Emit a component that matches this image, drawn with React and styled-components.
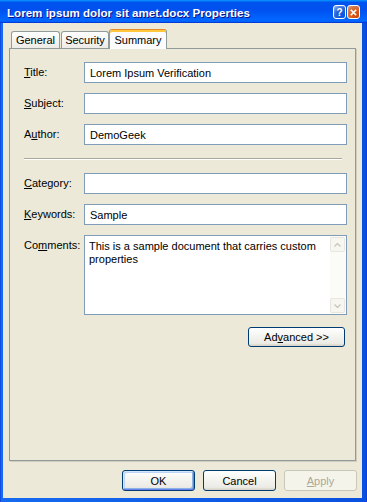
import React from 'react';
import styled, { createGlobalStyle } from 'styled-components';

const GlobalStyle = createGlobalStyle`
  html, body {
    margin: 0;
    padding: 0;
    background: #fff;
  }
  body {
    font-family: Tahoma, 'Liberation Sans', Arial, sans-serif;
    font-size: 11px;
    color: #000;
  }
`;

const Window = styled.div`
  width: 367px;
  height: 502px;
  box-sizing: border-box;
  display: flex;
  flex-direction: column;
  background: linear-gradient(to right, #0831d9 0, #166aee 1px, #0a50e0 calc(100% - 1px), #0831d9 100%);
`;

const TitleBar = styled.div`
  height: 23px;
  flex: none;
  display: flex;
  align-items: center;
  justify-content: space-between;
  padding: 0 7px 0 7px;
  background: linear-gradient(
    180deg,
    #0997ff 0%,
    #0053ee 10%,
    #0050ee 40%,
    #0066ff 85%,
    #0066ff 92%,
    #005bff 95%,
    #003dd7 97%,
    #003dd7 100%
  );
`;

const TitleText = styled.div`
  color: #fff;
  font-family: 'Liberation Sans', Arial, sans-serif;
  font-weight: bold;
  font-size: 11.6px;
  text-shadow: 1px 1px #0f1089;
  padding-top: 1px;
`;

const TitleButtons = styled.div`
  display: flex;
  gap: 1px;
  margin-top: 1px;
`;

const CaptionButton = styled.div`
  width: 13px;
  height: 14px;
  box-sizing: border-box;
  border: 1px solid #fff;
  border-radius: 3px;
  display: flex;
  align-items: center;
  justify-content: center;
  color: #fff;
  font-family: 'Liberation Sans', Arial, sans-serif;
  font-weight: bold;
  font-size: 10px;
  background: ${p =>
    p.close
      ? 'radial-gradient(circle at 90% 90%, #cc4600 0%, #dc6527 55%, #cd7546 70%, #e5a07c 100%)'
      : 'radial-gradient(circle at 90% 90%, #0054e9 0%, #2263d5 55%, #4479e4 70%, #a3bbec 100%)'};
`;

const Body = styled.div`
  flex: 1;
  margin: 0 5px 4px 3px;
  background: #ece9d8;
  padding: 6px 6px 7px 6px;
  display: flex;
  flex-direction: column;
`;

const TabRow = styled.div`
  height: 19px;
  flex: none;
  display: flex;
  align-items: flex-end;
  padding-left: 2px;
  position: relative;
  z-index: 1;
`;

const Tab = styled.div`
  box-sizing: border-box;
  width: ${p => p.w}px;
  height: ${p => (p.active ? 20 : 17)}px;
  margin-left: ${p => p.ml || 0}px;
  margin-bottom: ${p => (p.active ? -1 : 0)}px;
  border: 1px solid #919b9c;
  border-bottom: none;
  border-radius: 3px 3px 0 0;
  display: flex;
  align-items: center;
  justify-content: center;
  padding-top: ${p => (p.active ? 1 : 0)}px;
  background: ${p =>
    p.active ? '#fcfcfe' : 'linear-gradient(180deg, #fefefe 0%, #f4f3ee 60%, #ecebe6 100%)'};
  border-top-color: ${p => (p.active ? '#e68b2c' : '#919b9c')};
  box-shadow: ${p => (p.active ? 'inset 0 2px 0 #ffc73c' : 'none')};
`;

const Panel = styled.div`
  flex: 1;
  box-sizing: border-box;
  border: 1px solid #919b9c;
  box-shadow: 1px 1px 0 #d0cdbc;
  background: #ece9d8;
  padding: 13px 8px 0 14px;
  display: flex;
  flex-direction: column;
`;

const Row = styled.div`
  display: flex;
  align-items: ${p => (p.top ? 'flex-start' : 'center')};
  margin-bottom: ${p => (p.last ? 0 : 10)}px;
`;

const Label = styled.div`
  width: 60px;
  flex: none;
  line-height: 13px;
  padding-top: ${p => (p.top ? 4 : 0)}px;
`;

const TextBox = styled.div`
  width: 263px;
  height: 21px;
  box-sizing: border-box;
  border: 1px solid #7f9db9;
  background: #fff;
  padding: 0 5px;
  display: flex;
  align-items: center;
`;

const MemoBox = styled.div`
  width: 263px;
  height: 80px;
  box-sizing: border-box;
  border: 1px solid #7f9db9;
  background: #fff;
  display: flex;
`;

const MemoText = styled.div`
  flex: 1;
  padding: 4px 4px 0 4px;
  line-height: 13px;
`;

const ScrollBar = styled.div`
  width: 16px;
  flex: none;
  display: flex;
  flex-direction: column;
  justify-content: space-between;
  padding: 1px 0;
  background: #fbfbf8;
`;

const ScrollButton = styled.div`
  width: 15px;
  height: 15px;
  box-sizing: border-box;
  border: 1px solid #e8e7de;
  border-radius: 2px;
  background: #f7f6f1;
  display: flex;
  align-items: center;
  justify-content: center;
`;

const Separator = styled.div`
  height: 0;
  border-top: 1px solid #aca899;
  border-bottom: 1px solid #fff;
  margin: 3px 5px 13px 0;
`;

const RightAligned = styled.div`
  display: flex;
  justify-content: flex-end;
  margin: 12px 2px 0 0;
`;

const Button = styled.div`
  width: ${p => p.w || 73}px;
  height: ${p => p.h || 21}px;
  box-sizing: border-box;
  border: 1px solid ${p => (p.disabled ? '#c9c7ba' : '#003c74')};
  border-radius: 3px;
  display: flex;
  align-items: center;
  justify-content: center;
  color: ${p => (p.disabled ? '#aca899' : '#000')};
  background: ${p =>
    p.disabled
      ? '#f5f4ea'
      : 'linear-gradient(180deg, #ffffff 0%, #f5f5f1 40%, #ecebe6 85%, #d6d0c5 100%)'};
  box-shadow: ${p =>
    p.primary
      ? 'inset -1px -1px #6982ee, inset 1px 1px #cee7ff, inset -2px -2px #8db2e3, inset 2px 2px #bcd4f6'
      : 'none'};
`;

const ButtonRow = styled.div`
  display: flex;
  justify-content: flex-end;
  gap: 8px;
  margin: 9px -1px 0 0;
`;

const Chevron = ({ up }) => (
  <svg width="7" height="4" viewBox="0 0 7 4">
    <path
      d={up ? 'M0.5 3.5 L3.5 0.5 L6.5 3.5' : 'M0.5 0.5 L3.5 3.5 L6.5 0.5'}
      fill="none"
      stroke="#c9c7ba"
      strokeWidth="1.3"
    />
  </svg>
);

const fields = [
  { key: 't', label: 'itle:', hot: 'T', value: 'Lorem Ipsum Verification' },
  { key: 's', label: 'ubject:', hot: 'S', value: '' },
  { key: 'a', pre: 'A', hot: 'u', label: 'thor:', value: 'DemoGeek' },
];

const fields2 = [
  { key: 'c', label: 'ategory:', hot: 'C', value: '' },
  { key: 'k', label: 'eywords:', hot: 'K', value: 'Sample' },
];

const FieldLabel = ({ f }) => (
  <Label>
    {f.pre}
    <u>{f.hot}</u>
    {f.label}
  </Label>
);

export default function App() {
  return (
    <>
      <GlobalStyle />
      <Window>
        <TitleBar>
          <TitleText>Lorem ipsum dolor sit amet.docx Properties</TitleText>
          <TitleButtons>
            <CaptionButton>?</CaptionButton>
            <CaptionButton close>
              <svg width="7" height="7" viewBox="0 0 7 7">
                <path d="M0.8 0.8 L6.2 6.2 M6.2 0.8 L0.8 6.2" stroke="#fff" strokeWidth="1.6" />
              </svg>
            </CaptionButton>
          </TitleButtons>
        </TitleBar>
        <Body>
          <TabRow>
            <Tab w={49}>General</Tab>
            <Tab w={48} ml={1}>Security</Tab>
            <Tab w={58} active>Summary</Tab>
          </TabRow>
          <Panel>
            {fields.map(f => (
              <Row key={f.key}>
                <FieldLabel f={f} />
                <TextBox>{f.value}</TextBox>
              </Row>
            ))}
            <Separator />
            {fields2.map(f => (
              <Row key={f.key}>
                <FieldLabel f={f} />
                <TextBox>{f.value}</TextBox>
              </Row>
            ))}
            <Row top last>
              <Label top>
                Co<u>m</u>ments:
              </Label>
              <MemoBox>
                <MemoText>This is a sample document that carries custom properties</MemoText>
                <ScrollBar>
                  <ScrollButton>
                    <Chevron up />
                  </ScrollButton>
                  <ScrollButton>
                    <Chevron />
                  </ScrollButton>
                </ScrollBar>
              </MemoBox>
            </Row>
            <RightAligned>
              <Button w={97} h={20}>
                Ad<u>v</u>anced &gt;&gt;
              </Button>
            </RightAligned>
          </Panel>
          <ButtonRow>
            <Button primary>OK</Button>
            <Button>Cancel</Button>
            <Button disabled>
              <u>A</u>pply
            </Button>
          </ButtonRow>
        </Body>
      </Window>
    </>
  );
}
